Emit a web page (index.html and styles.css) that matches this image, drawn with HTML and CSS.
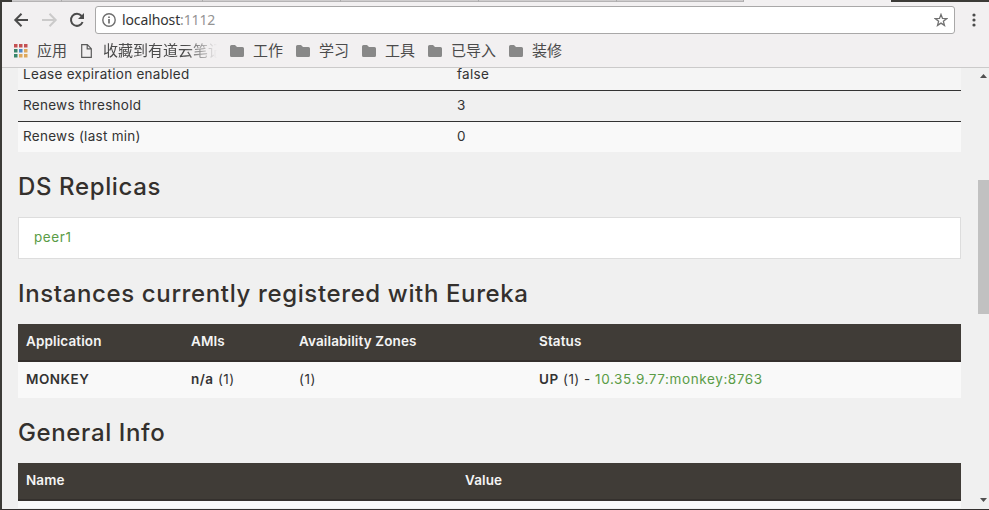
FILE: index.html
```html
<!DOCTYPE html>
<html lang="zh-CN">
<head>
<meta charset="utf-8">
<title>Eureka</title>
<link rel="stylesheet" href="styles.css">
</head>
<body>
<div class="window">
  <div class="tabstrip"><i class="corner"></i><i class="tab t1"></i><i class="tab t2"></i><i class="tab t3"></i><i class="tab t4"></i><i class="tab t5"></i><i class="tab t6"></i><i class="active"></i><i class="rest"></i></div>
  <header class="toolbar">
    <svg class="nav" width="93" height="28" viewBox="0 0 93 28" fill="none" stroke-width="2">
      <path d="M26 14H14M19.5 7.8L13.3 14l6.2 6.2" stroke="#4b4b4b"/>
      <path d="M40 14h12M47.5 7.8l6.2 6.2-6.2 6.2" stroke="#cbcaca"/>
      <path d="M79.6 10A6 6 0 1 0 80.6 16" stroke="#4b4b4b"/>
      <path d="M82 7v6h-6z" fill="#4b4b4b"/>
    </svg>
    <div class="address">
      <svg width="14" height="14" viewBox="0 0 14 14" fill="none" stroke="#6e6e6e"><circle cx="7" cy="7" r="6.2" stroke-width="1.4"/><path d="M7 6v4.4M7 3.4v1.6" stroke-width="1.7"/></svg>
      <span class="url">localhost<span>:1112</span></span>
      <svg class="star" width="14" height="14" viewBox="0 0 14 14" fill="none" stroke="#717171" stroke-width="1.3"><path d="M7 1.4l1.5 4 4.2.2-3.3 2.7 1.1 4.1L7 10.1l-3.5 2.3 1.1-4.1L1.3 5.6l4.2-.2z"/></svg>
    </div>
    <svg class="menu" width="4" height="14" viewBox="0 0 4 14" fill="#4b4b4b"><circle cx="2" cy="2" r="1.6"/><circle cx="2" cy="7" r="1.6"/><circle cx="2" cy="12" r="1.6"/></svg>
  </header>
  <nav class="bookmarks">
    <svg class="apps" width="14" height="14" viewBox="0 0 14 14"><path d="M0 0h3.5v3.5H0zM5 0h3.5v3.5H5zM10 0h3.5v3.5H10z" fill="#c45052"/><path d="M0 5h3.5v3.5H0zM0 10h3.5v3.5H0z" fill="#38856a"/><path d="M5 5h3.5v3.5H5z" fill="#4c86c6"/><path d="M10 5h3.5v3.5H10zM5 10h3.5v3.5H5zM10 10h3.5v3.5H10z" fill="#dda75c"/></svg>
    <span class="label apps-label">应用</span>
    <svg class="page-icon" width="11" height="14" viewBox="0 0 11 14" fill="none" stroke="#5b5b5b" stroke-width="1.2"><path d="M.7.7h5.6l4 4v8.6H.7zM6.2.7v4.1h4.1"/></svg>
    <span class="label faded">收藏到有道云笔记</span>
    <a class="folder"><svg width="14" height="12"><path d="M0 1.5Q0 0 1.5 0H5l2 2h5.5Q14 2 14 3.5v7Q14 12 12.5 12h-11Q0 12 0 10.5z" fill="#888"/></svg><span class="label">工作</span></a>
    <a class="folder"><svg width="14" height="12"><path d="M0 1.5Q0 0 1.5 0H5l2 2h5.5Q14 2 14 3.5v7Q14 12 12.5 12h-11Q0 12 0 10.5z" fill="#888"/></svg><span class="label">学习</span></a>
    <a class="folder"><svg width="14" height="12"><path d="M0 1.5Q0 0 1.5 0H5l2 2h5.5Q14 2 14 3.5v7Q14 12 12.5 12h-11Q0 12 0 10.5z" fill="#888"/></svg><span class="label">工具</span></a>
    <a class="folder"><svg width="14" height="12"><path d="M0 1.5Q0 0 1.5 0H5l2 2h5.5Q14 2 14 3.5v7Q14 12 12.5 12h-11Q0 12 0 10.5z" fill="#888"/></svg><span class="label">已导入</span></a>
    <a class="folder"><svg width="14" height="12"><path d="M0 1.5Q0 0 1.5 0H5l2 2h5.5Q14 2 14 3.5v7Q14 12 12.5 12h-11Q0 12 0 10.5z" fill="#888"/></svg><span class="label">装修</span></a>
  </nav>
  <div class="viewport">
    <main>
      <div class="stats">
        <div class="row first"><span>Lease expiration enabled</span><span>false</span></div>
        <div class="row"><span>Renews threshold</span><span>3</span></div>
        <div class="row last"><span>Renews (last min)</span><span>0</span></div>
      </div>
      <h1>DS Replicas</h1>
      <div class="peers"><a class="peer">peer1</a></div>
      <h1>Instances currently registered with Eureka</h1>
      <div class="table instances">
        <div class="head"><span>Application</span><span>AMIs</span><span>Availability Zones</span><span>Status</span></div>
        <div class="body"><b>MONKEY</b><span><b>n/a</b> (1)</span><span>(1)</span><span><b>UP</b> (1) - <a class="inst">10.35.9.77:monkey:8763</a></span></div>
      </div>
      <h1>General Info</h1>
      <div class="table info">
        <div class="head"><span>Name</span><span>Value</span></div>
        <div class="body"></div>
      </div>
    </main>
    <aside class="scrollbar">
      <svg width="7" height="4"><path d="M0 4L3.5 0 7 4z" fill="#505050"/></svg>
      <div class="thumb"></div>
      <svg class="down" width="7" height="4"><path d="M0 0h7L3.5 4z" fill="#505050"/></svg>
    </aside>
  </div>
</div>
</body>
</html>
```

FILE: styles.css
```css
* { box-sizing: border-box; }
body { margin: 0; overflow: hidden; font-family: Inter, "Liberation Sans", sans-serif; color: #333; }
svg { display: block; flex: none; }
.window { width: 989px; height: 510px; background: #f2f0f1; border-left: 2px solid #3c3b37; border-bottom: 1px solid #33302f; display: flex; flex-direction: column; }
.tabstrip { height: 2px; display: flex; background: #3c3b37; flex: none; }
.tabstrip i { height: 2px; }
.corner { width: 10px; background: #3c3b37; }
.tab { background: #cfcdce; border-right: 1px solid #aaa; border-bottom: 1px solid #b5b3b4; }
.t1 { width: 50px; }
.t2 { width: 141px; }
.t3 { width: 138px; }
.t4 { width: 138px; }
.t5 { width: 138px; }
.t6 { width: 127px; }
.active { width: 147px; background: #f2f0f1; }
.rest { flex: 1; }
.toolbar { height: 36px; flex: none; display: flex; align-items: center; }
.address { width: 860px; height: 28px; background: #fff; border: 1px solid #a9a8a8; border-radius: 3px; display: flex; align-items: center; padding: 0 6px; }
.url { margin-left: 6px; font: 14px/24px "Noto Sans", sans-serif; letter-spacing: -0.12px; color: #333; }
.url span { color: #949494; }
.star { margin-left: auto; }
.menu { margin-left: 17px; }
.bookmarks { height: 30px; flex: none; display: flex; align-items: center; border-bottom: 1px solid #cbcaca; padding: 0 0 4px 12px; font: 15px/24px "Noto Sans CJK SC", sans-serif; color: #4b4b4b; background: #f2f0f1; white-space: nowrap; }
.apps, .page-icon, .folder svg { margin-top: 1px; }
.label { height: 26px; }
.apps-label { margin-left: 9px; }
.page-icon { margin-left: 14px; margin-right: 11px; }
.faded { width: 114px; overflow: hidden; -webkit-mask-image: linear-gradient(90deg, #000 72%, transparent 100%); mask-image: linear-gradient(90deg, #000 72%, transparent 100%); }
.folder { display: flex; align-items: center; gap: 9px; margin-left: 13px; }
.viewport { flex: 1; min-height: 0; overflow: hidden; background: #f0f0f0; display: flex; }
main { width: 943px; margin-left: 16px; flex: none; font-size: 13.5px; letter-spacing: 0.28px; }
.stats .row { height: 31px; display: grid; grid-template-columns: 434px 1fr; padding-left: 5px; line-height: 29px; border-bottom: 1px solid #333; }
.stats .first { height: 23px; line-height: 12px; background: #f5f5f5; }
.stats .last { height: 30px; background: #f9f9f9; border: 0; }
h1 { margin: 0; height: 65px; font: 500 24px/70px Inter, sans-serif; letter-spacing: 0.63px; color: #34302d; white-space: nowrap; }
.peers { height: 42px; background: #fff; border: 1px solid #ddd; padding-left: 15px; line-height: 39px; }
a.peer, a.inst { color: #5a9c46; letter-spacing: 0.6px; }
.head, .body { display: grid; padding-left: 8px; }
.instances .head, .instances .body { grid-template-columns: 165px 108px 240px 1fr; }
.info .head { grid-template-columns: 439px 1fr; }
.head { height: 38px; background: #403c37; border-bottom: 2px solid #34302d; color: #f4f4f4; font-weight: 600; line-height: 35px; letter-spacing: 0.12px; }
.body { height: 36px; background: #f9f9f9; line-height: 35px; letter-spacing: 0.5px; }
b { font-weight: 600; }
.info .body { height: 7px; }
.scrollbar { margin-left: auto; width: 11px; display: flex; flex-direction: column; align-items: center; padding-top: 6px; }
.thumb { width: 11px; height: 134px; margin-top: 102px; background: #c1c1c1; }
.down { margin-top: 184px; }
```
